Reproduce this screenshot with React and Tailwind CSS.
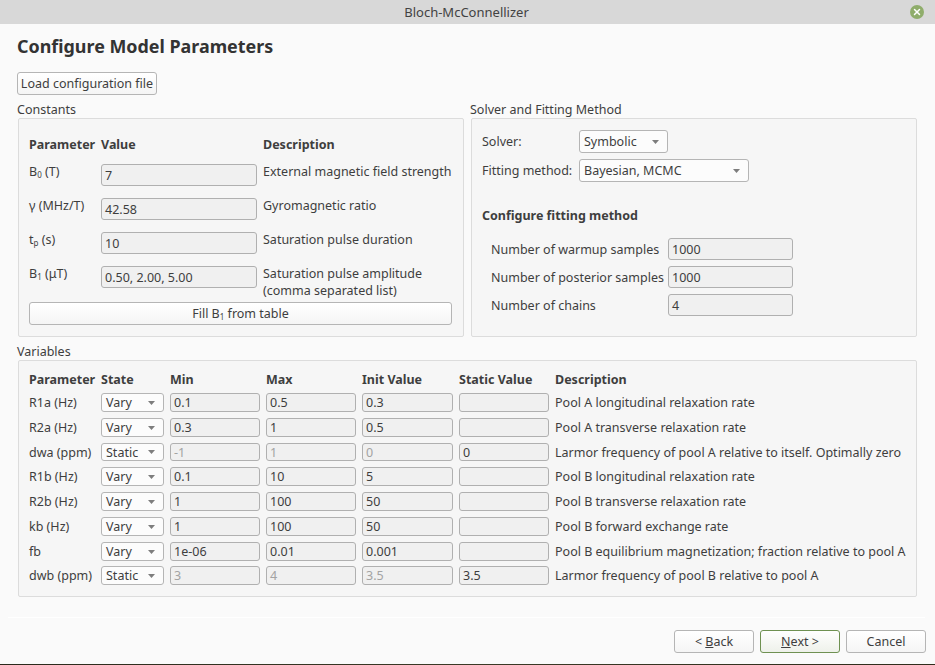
import React from 'react';
import { X } from 'lucide-react';

const constants = [
  { param: <>B<sub className="align-baseline text-[8px]">0</sub> (T)</>, value: '7', desc: 'External magnetic field strength', rowClass: 'h-[34px]' },
  { param: 'γ (MHz/T)', value: '42.58', desc: 'Gyromagnetic ratio', rowClass: 'h-[34px]' },
  { param: <>t<sub className="align-baseline text-[8px]">p</sub> (s)</>, value: '10', desc: 'Saturation pulse duration', rowClass: 'h-[34px]' },
  { param: <>B<sub className="align-baseline text-[8px]">1</sub> (μT)</>, value: '0.50, 2.00, 5.00', desc: <>Saturation pulse amplitude<br />(comma separated list)</>, rowClass: 'h-[36px]' },
];

const variables = [
  { param: 'R1a (Hz)', state: 'Vary', min: '0.1', max: '0.5', init: '0.3', fixed: '', desc: 'Pool A longitudinal relaxation rate' },
  { param: 'R2a (Hz)', state: 'Vary', min: '0.3', max: '1', init: '0.5', fixed: '', desc: 'Pool A transverse relaxation rate' },
  { param: 'dwa (ppm)', state: 'Static', min: '-1', max: '1', init: '0', fixed: '0', desc: 'Larmor frequency of pool A relative to itself. Optimally zero', short: true },
  { param: 'R1b (Hz)', state: 'Vary', min: '0.1', max: '10', init: '5', fixed: '', desc: 'Pool B longitudinal relaxation rate' },
  { param: 'R2b (Hz)', state: 'Vary', min: '1', max: '100', init: '50', fixed: '', desc: 'Pool B transverse relaxation rate' },
  { param: 'kb (Hz)', state: 'Vary', min: '1', max: '100', init: '50', fixed: '', desc: 'Pool B forward exchange rate' },
  { param: 'fb', state: 'Vary', min: '1e-06', max: '0.01', init: '0.001', fixed: '', desc: 'Pool B equilibrium magnetization; fraction relative to pool A', tight: true },
  { param: 'dwb (ppm)', state: 'Static', min: '3', max: '4', init: '3.5', fixed: '3.5', desc: 'Larmor frequency of pool B relative to pool A' },
];

const Caret = () => (
  <svg width="7" height="4" viewBox="0 0 7 4" className="shrink-0">
    <path d="M0 0h7L3.5 4z" fill="#7d7d7d" />
  </svg>
);

const Select = ({ value, className }) => (
  <div className={`flex items-center justify-between rounded-[3px] border border-[#b5b5b5] bg-[#fcfcfc] pl-1 pr-[8px] ${className}`}>
    <span>{value}</span>
    <Caret />
  </div>
);

const Field = ({ value, disabled, className }) => (
  <div className={`flex items-center rounded-[3px] border border-[#b0b0b0] bg-[#f0f0f0] pl-[3px] ${disabled ? 'text-[#a3a3a3]' : ''} ${className}`}>
    {value}
  </div>
);

const Button = ({ children, primary, className }) => (
  <button className={`flex items-center justify-center rounded-[3px] border bg-gradient-to-b from-white ${primary ? 'border-[#6f9152] to-[#eef1ea]' : 'border-[#b5b5b5] to-[#f5f5f5]'} ${className}`}>
    {children}
  </button>
);

export default function App() {
  return (
    <div className="flex h-[665px] w-[935px] flex-col overflow-hidden bg-[#fafafa] font-['Noto_Sans',sans-serif] text-[12.5px] leading-[17px] text-[#3e3e3e]">
      {/* Title bar */}
      <div className="flex h-6 items-center justify-between bg-[#d8d8d8] px-[11px]">
        <span className="w-[12px]" />
        <span className="text-[13px] text-[#424242]">Bloch-McConnellizer</span>
        <span className="flex h-[14px] w-[14px] items-center justify-center rounded-full bg-[#8fad6b]">
          <X size={10} strokeWidth={3.5} className="text-white" />
        </span>
      </div>

      <div className="flex-1 px-[18px] pt-[10px]">
        <h1 className="-ml-px h-[25px] text-[17.9px] font-bold leading-[25px] text-[#333333]">Configure Model Parameters</h1>

        <Button className="mt-[13px] -ml-px h-[23px] w-[140px]">Load configuration file</Button>

        <div className="mt-[5px] flex">
          {/* Constants */}
          <div className="w-[446px]">
            <div className="-ml-px h-[18px] pt-px leading-[18px]">Constants</div>
            <div className="h-[219px] rounded-[2px] border border-[#dcdcdc] bg-[#f6f6f6] pl-[10px] pr-[11px] pt-[17px]">
              <div className="flex h-[19px] font-bold">
                <div className="w-[72px]">Parameter</div>
                <div className="w-[162px]">Value</div>
                <div>Description</div>
              </div>
              <div className="mt-[9px]">
                {constants.map((c) => (
                  <div key={c.value} className={`flex ${c.rowClass}`}>
                    <div className="w-[72px] -translate-y-px">{c.param}</div>
                    <Field value={c.value} className="h-[22px] w-[156px]" />
                    <div className="ml-[6px] -translate-y-px">{c.desc}</div>
                  </div>
                ))}
              </div>
              <Button className="h-[23px] w-full">
                <span>Fill B<sub className="align-baseline text-[8px]">1</sub> from table</span>
              </Button>
            </div>
          </div>

          {/* Solver */}
          <div className="ml-[7px] w-[446px]">
            <div className="-ml-px h-[18px] pt-px leading-[18px]">Solver and Fitting Method</div>
            <div className="h-[219px] rounded-[2px] border border-[#dcdcdc] bg-[#f6f6f6] pl-[10px] pt-[11px]">
              <div className="flex h-[23px] items-center">
                <div className="w-[97px]">Solver:</div>
                <Select value="Symbolic" className="h-[23px] w-[89px]" />
              </div>
              <div className="mt-[6px] flex h-[23px] items-center">
                <div className="w-[97px]">Fitting method:</div>
                <Select value="Bayesian, MCMC" className="h-[23px] w-[170px]" />
              </div>
              <div className="mt-[25px] font-bold">Configure fitting method</div>
              <div className="ml-[9px] mt-[14px] flex flex-col gap-[6px]">
                {[
                  ['Number of warmup samples', '1000'],
                  ['Number of posterior samples', '1000'],
                  ['Number of chains', '4'],
                ].map(([label, value]) => (
                  <div key={label} className="flex h-[22px] items-center">
                    <div className="w-[177px] whitespace-nowrap">{label}</div>
                    <Field value={value} className="h-[22px] w-[125px]" />
                  </div>
                ))}
              </div>
            </div>
          </div>
        </div>

        {/* Variables */}
        <div className="-ml-px mt-[6px] h-[17px] leading-[18px]">Variables</div>
        <div className="h-[237px] w-[899px] rounded-[2px] border border-[#dcdcdc] bg-[#f6f6f6] pl-[10px] pt-[10px]">
          <div className="flex h-[17px] font-bold">
            <div className="w-[72px]">Parameter</div>
            <div className="w-[69px]">State</div>
            <div className="w-[96px]">Min</div>
            <div className="w-[96px]">Max</div>
            <div className="w-[97px]">Init Value</div>
            <div className="w-[96px]">Static Value</div>
            <div>Description</div>
          </div>
          <div className="mt-[5px]">
            {variables.map((v) => (
              <div key={v.param} className={`flex items-center ${v.short ? 'h-[18px]' : 'h-[19px]'} ${v.tight ? 'mb-[5px]' : 'mb-[6px]'}`}>
                <div className="w-[72px]">{v.param}</div>
                <Select value={v.state} className="h-full w-[63px]" />
                <Field value={v.min} disabled={v.state === 'Static'} className="ml-[6px] h-full w-[90px]" />
                <Field value={v.max} disabled={v.state === 'Static'} className="ml-[6px] h-full w-[90px]" />
                <Field value={v.init} disabled={v.state === 'Static'} className="ml-[6px] h-full w-[91px]" />
                <Field value={v.fixed} disabled={v.state !== 'Static'} className="ml-[6px] h-full w-[90px]" />
                <div className="ml-[6px] whitespace-nowrap">{v.desc}</div>
              </div>
            ))}
          </div>
        </div>

        <div className="-ml-[10px] mt-[20px] h-px w-[917px] bg-white" />

        {/* Footer buttons */}
        <div className="mt-[12px] -mr-[9px] flex justify-end gap-[6px]">
          <Button className="h-[23px] w-[80px]"><span>&lt; <span className="underline">B</span>ack</span></Button>
          <Button primary className="h-[23px] w-[80px]"><span><span className="underline">N</span>ext &gt;</span></Button>
          <Button className="h-[23px] w-[80px]">Cancel</Button>
        </div>
      </div>

      {/* Sliver of desktop wallpaper under the window */}
      <div className="h-px bg-gradient-to-r from-[#2a2a1c] via-[#3a3a26] to-[#2f2d1c]" />
    </div>
  );
}
